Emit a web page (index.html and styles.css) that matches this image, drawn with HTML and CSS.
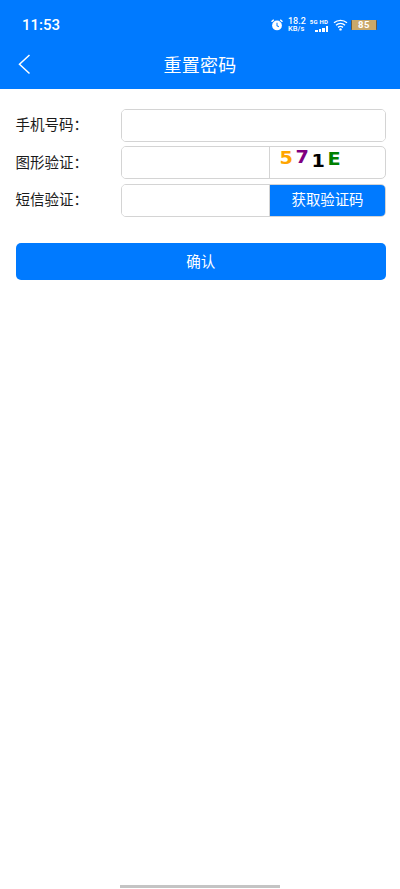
FILE: index.html
```html
<!DOCTYPE html>
<html lang="zh">
<head>
    <meta charset="UTF-8">
    <meta name="viewport" content="width=device-width, initial-scale=1.0">
    <title>重置密码</title>
    <link rel="stylesheet" href="styles.css">
</head>
<body>
    <header class="header">
        <div class="status-bar">
            <span class="time">11:53</span>
            <div class="status-icons">
                <svg class="icon-alarm" width="12" height="12" viewBox="0 0 13 13">
                    <circle cx="6.5" cy="7" r="5.3" fill="#fff"/>
                    <path d="M6.5 4v3.2l2 1.2" fill="none" stroke="#007aff" stroke-width="1.1"/>
                    <path d="M0.6 3L3 0.8M12.4 3L10 0.8" stroke="#fff" stroke-width="1.6"/>
                </svg>
                <div class="speed">
                    <span class="speed-num">18.2</span>
                    <span class="speed-unit">KB/s</span>
                </div>
                <div class="signal">
                    <span class="signal-label">5G HD</span>
                    <div class="signal-bars">
                        <i class="bar bar-1"></i>
                        <i class="bar bar-2"></i>
                        <i class="bar bar-3"></i>
                        <i class="bar bar-4"></i>
                    </div>
                </div>
                <svg class="icon-wifi" width="15" height="12" viewBox="0 0 15 12">
                    <path d="M1 3.8C4.8 0.6 10.2 0.6 14 3.8M3 6.2C5.6 4 9.4 4 12 6.2M5 8.4C6.5 7.2 8.5 7.2 10 8.4" fill="none" stroke="#fff" stroke-width="1.4"/>
                    <circle cx="7.5" cy="10.4" r="1.2" fill="#fff"/>
                </svg>
                <div class="battery">85</div>
            </div>
        </div>
        <div class="nav-bar">
            <svg class="back" width="13" height="21" viewBox="0 0 13 21">
                <path d="M11.5 1L1.5 10.2l10 9.3" fill="none" stroke="#fff" stroke-width="1.5"/>
            </svg>
            <h1 class="title">重置密码</h1>
        </div>
    </header>

    <main class="form">
        <div class="form-row">
            <label class="form-label">手机号码：</label>
            <div class="field">
                <input class="field-input" type="text">
            </div>
        </div>
        <div class="form-row">
            <label class="form-label">图形验证：</label>
            <div class="field">
                <input class="field-input" type="text">
                <div class="captcha">
                    <span class="c-orange">5</span>
                    <span class="c-purple">7</span>
                    <span class="c-black">1</span>
                    <span class="c-green">E</span>
                </div>
            </div>
        </div>
        <div class="form-row">
            <label class="form-label">短信验证：</label>
            <div class="field">
                <input class="field-input" type="text">
                <button class="sms-btn">获取验证码</button>
            </div>
        </div>
        <button class="confirm-btn">确认</button>
    </main>

    <div class="home-indicator"></div>
</body>
</html>
```

FILE: styles.css
```css
* {
    box-sizing: border-box;
}
html, body {
    height: 100%;
}
body {
    margin: 0;
    background-color: white;
    color: #1a1a1a;
    font-family: "Liberation Sans", "Noto Sans CJK SC", sans-serif;
    display: flex;
    flex-direction: column;
}
.header {
    background-color: #007aff;
    color: white;
    height: 88.5px;
    flex-shrink: 0;
}
.status-bar {
    height: 44px;
    padding: 6px 23px 0 22px;
    display: flex;
    justify-content: space-between;
    align-items: center;
}
.time {
    font-family: Roboto, sans-serif;
    font-size: 15px;
    font-weight: 500;
}
.status-icons {
    display: flex;
    align-items: center;
}
.icon-alarm {
    margin-right: 5px;
}
.speed {
    width: 17px;
    display: flex;
    flex-direction: column;
    font-family: Roboto, sans-serif;
    font-weight: 500;
    margin-right: 5px;
}
.speed-num {
    font-size: 9px;
    line-height: 7px;
}
.speed-unit {
    font-size: 7.5px;
    line-height: 8px;
}
.signal {
    width: 18px;
    display: flex;
    flex-direction: column;
    align-items: flex-end;
    margin-right: 5px;
}
.signal-label {
    font-family: Roboto, sans-serif;
    font-size: 6px;
    font-weight: 700;
    line-height: 7px;
    letter-spacing: 0.2px;
    white-space: nowrap;
}
.signal-bars {
    display: flex;
    align-items: flex-end;
    gap: 1px;
    height: 6px;
    margin-top: 1px;
}
.bar {
    width: 2.5px;
    background-color: white;
}
.bar-1 { height: 2px; }
.bar-2 { height: 3px; }
.bar-3 { height: 4px; }
.bar-4 { height: 6px; }
.icon-wifi {
    margin-right: 3px;
}
.battery {
    width: 26px;
    height: 10px;
    background-color: #c9a86a;
    border-left: 1px solid #5f5a4e;
    border-right: 1px solid #5f5a4e;
    border-radius: 1px;
    font-family: Roboto, sans-serif;
    font-size: 9.5px;
    font-weight: 700;
    line-height: 10px;
    letter-spacing: 0.5px;
    text-align: center;
}
.nav-bar {
    height: 40px;
    display: flex;
    align-items: center;
    justify-content: center;
    position: relative;
}
.back {
    position: absolute;
    left: 17.5px;
    top: 10px;
}
.title {
    margin: 0;
    font-size: 18px;
    font-weight: normal;
    letter-spacing: 0.3px;
}
.form {
    padding: 20.3px 14px 0 15.5px;
}
.form-row {
    display: flex;
    align-items: center;
    height: 33px;
    margin-bottom: 4.5px;
}
.form-label {
    width: 105.5px;
    font-size: 14.5px;
    padding-bottom: 3px;
    flex-shrink: 0;
}
.field {
    flex: 1;
    height: 100%;
    display: flex;
    border: 1px solid #d4d4d4;
    border-radius: 5px;
    overflow: hidden;
}
.field-input {
    flex: 1;
    min-width: 0;
    border: none;
    outline: none;
    padding: 0 8px;
}
.captcha, .sms-btn {
    width: 116px;
    flex-shrink: 0;
    border-left: 1px solid #d4d4d4;
}
.captcha {
    padding: 1px 0 0 7.5px;
    display: flex;
    align-items: flex-start;
    font-family: "DejaVu Sans", sans-serif;
    font-size: 17.5px;
    font-weight: bold;
    line-height: 20px;
}
.captcha span {
    width: 16.3px;
    text-align: center;
}
/* the captcha image has its letters stretched sideways */
.c-orange { color: orange; transform: scaleX(1.1); }
.c-purple { color: purple; transform: translateY(-1px) scaleX(1.1); }
.c-black { color: black; transform: translateY(2.5px) scaleX(1.1); }
.c-green { color: green; transform: translateY(0.5px) scaleX(1.1); }
.sms-btn {
    background-color: #007aff;
    color: white;
    border-top: none;
    border-right: none;
    border-bottom: none;
    font-family: inherit;
    font-size: 14.4px;
    padding: 0 0 3px;
}
.confirm-btn {
    display: block;
    width: 100%;
    height: 37px;
    margin-top: 26px;
    background-color: #007aff;
    color: white;
    border: none;
    border-radius: 5px;
    font-family: inherit;
    font-size: 14.5px;
    padding: 0 0 2px;
}
.home-indicator {
    width: 160px;
    height: 3px;
    margin: auto auto 0;
    background-color: #c4c4c4;
    transform: translateY(-1px);
}
```
